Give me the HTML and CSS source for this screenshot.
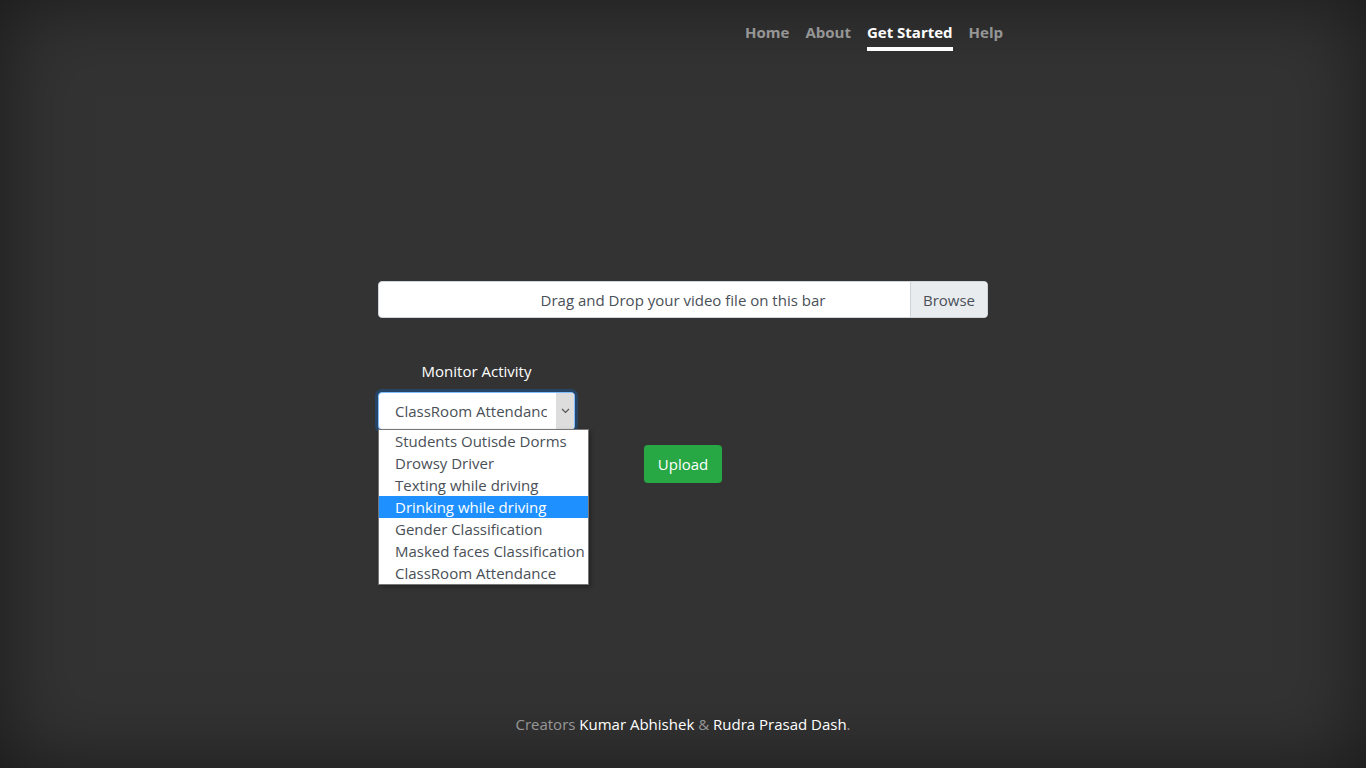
FILE: index.html
```html
<!DOCTYPE html>
<html lang="en">
<head>
<meta charset="utf-8">
<title>Monitor Activity</title>
<link rel="stylesheet" href="styles.css">
</head>
<body>
<div class="cover">
  <header class="masthead">
    <nav class="nav">
      <a class="nav-link" href="#">Home</a>
      <a class="nav-link" href="#">About</a>
      <a class="nav-link active" href="#">Get Started</a>
      <a class="nav-link" href="#">Help</a>
    </nav>
  </header>
  <main class="content">
    <div class="file-bar">
      <div class="file-text">Drag and Drop your video file on this bar</div>
      <div class="file-btn">Browse</div>
    </div>
    <div class="form-row">
      <div class="select-col">
        <div class="label">Monitor Activity</div>
        <div class="select-wrap">
          <div class="select">
            <span class="select-value">ClassRoom Attendance</span>
            <span class="select-arrow">
              <svg width="9" height="6" viewBox="0 0 9 6"><path d="M1 1l3.5 3.5L8 1" fill="none" stroke="#555" stroke-width="1.2"/></svg>
            </span>
          </div>
          <ul class="options">
            <li>Students Outisde Dorms</li>
            <li>Drowsy Driver</li>
            <li>Texting while driving</li>
            <li class="hl">Drinking while driving</li>
            <li>Gender Classification</li>
            <li>Masked faces Classification</li>
            <li>ClassRoom Attendance</li>
          </ul>
        </div>
      </div>
      <button class="upload">Upload</button>
    </div>
  </main>
  <footer class="footer">
    <p>Creators <a href="#">Kumar Abhishek</a> &amp; <a href="#">Rudra Prasad Dash</a>.</p>
  </footer>
</div>
</body>
</html>
```
FILE: styles.css
```css
html, body {
  margin: 0;
  height: 100%;
}
body {
  background: #333;
  box-shadow: inset 0 0 5rem rgba(0,0,0,.5);
  color: #fff;
  font-family: "Open Sans", "Liberation Sans", sans-serif;
  font-size: 15px;
  overflow: hidden;
}
.cover {
  height: 768px;
  display: flex;
  flex-direction: column;
}
.masthead {
  width: 640px;
  margin: 0 auto;
  padding-top: 20px;
  display: flex;
  justify-content: flex-end;
}
.nav {
  display: flex;
  gap: 16px;
}
.nav-link {
  color: rgba(255,255,255,.5);
  font-weight: 700;
  text-decoration: none;
  line-height: 24px;
  padding-bottom: 3px;
  border-bottom: 4px solid transparent;
}
.nav-link.active {
  color: #fff;
  border-bottom-color: #fff;
}
.content {
  flex: 1;
  width: 610px;
  margin: 0 auto;
  padding-top: 230px;
}
.file-bar {
  display: flex;
  height: 37px;
  border-radius: 4px;
  background: #fff;
  border: 1px solid #ced4da;
  box-sizing: border-box;
  overflow: hidden;
}
.file-text {
  flex: 1;
  display: flex;
  align-items: center;
  justify-content: center;
  padding-left: 77px;
  color: #495057;
}
.file-btn {
  width: 76px;
  display: flex;
  align-items: center;
  justify-content: center;
  background: #e9ecef;
  border-left: 1px solid #ced4da;
  color: #495057;
}
.form-row {
  display: flex;
  align-items: flex-start;
  gap: 69px;
  margin-top: 42px;
}
.select-col {
  width: 197px;
  display: flex;
  flex-direction: column;
  align-items: center;
}
.label {
  line-height: 22px;
  margin-bottom: 10px;
}
.select-wrap {
  position: relative;
  width: 197px;
}
.select {
  height: 38px;
  box-sizing: border-box;
  border: 1px solid #80bdff;
  border-radius: 4px;
  box-shadow: 0 0 0 3px rgba(0,123,255,.25);
  background: #fff;
  display: flex;
  align-items: stretch;
  overflow: hidden;
}
.select-value {
  flex: 1;
  padding-left: 16px;
  margin-right: 9px;
  display: flex;
  align-items: center;
  white-space: nowrap;
  overflow: hidden;
  color: #495057;
}
.select-arrow {
  width: 18px;
  background: #ddd;
  display: flex;
  align-items: center;
  justify-content: center;
}
.options {
  position: absolute;
  top: 37px;
  left: 0;
  width: 211px;
  margin: 0;
  padding: 0;
  list-style: none;
  background: #fff;
  border: 1px solid #767676;
  box-sizing: border-box;
  box-shadow: 2px 2px 4px rgba(0,0,0,.3);
  z-index: 2;
}
.options li {
  line-height: 22px;
  height: 22px;
  padding-left: 16px;
  color: #495057;
  white-space: nowrap;
}
.options li.hl {
  background: #1e90ff;
  color: #fff;
}
.upload {
  margin-top: 85px;
  width: 78px;
  height: 38px;
  border: none;
  border-radius: 4px;
  background: #28a745;
  color: #fff;
  font-family: inherit;
  font-size: 15px;
  padding: 0;
}
.footer {
  text-align: center;
  color: rgba(255,255,255,.5);
  padding-bottom: 32px;
}
.footer p {
  margin: 0;
  line-height: 24px;
}
.footer a {
  color: #fff;
  text-decoration: none;
}
```
